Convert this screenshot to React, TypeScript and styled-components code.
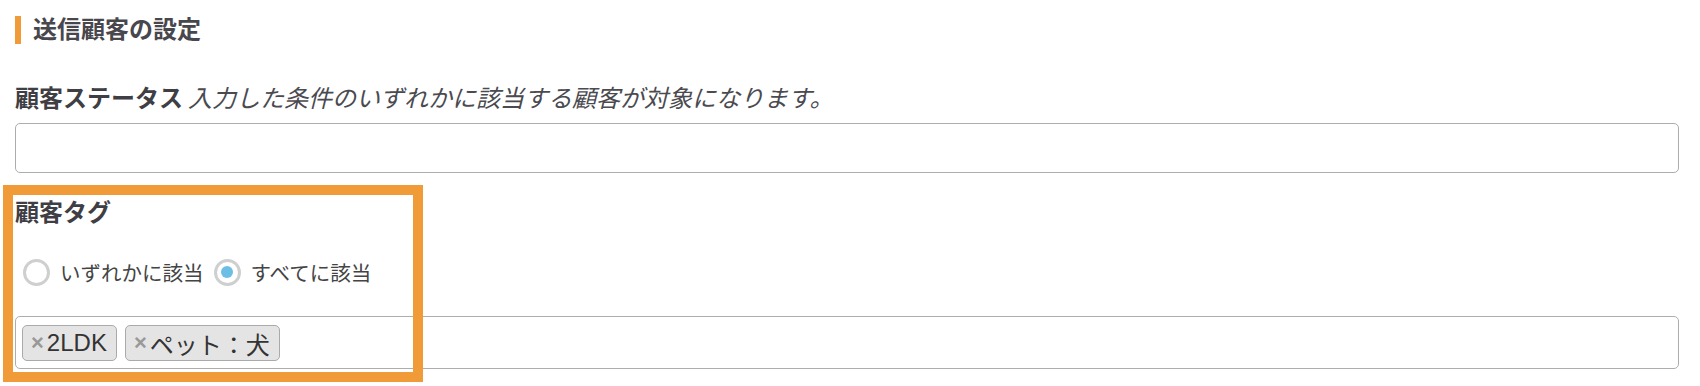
import React, { useState } from 'react';
import styled, { createGlobalStyle } from 'styled-components';

const GlobalStyle = createGlobalStyle`
  html, body {
    margin: 0;
    padding: 0;
    background: #fff;
  }
  body {
    font-family: "Liberation Sans", "Noto Sans CJK JP", sans-serif;
    color: #444;
  }
`;

const ORANGE = '#f09a38';

const Page = styled.div`
  width: 1700px;
  height: 386px;
  box-sizing: border-box;
  padding: 16px 21px 0 15px;
  overflow: hidden;
`;

const SectionTitle = styled.h2`
  margin: 0;
  border-left: 6px solid ${ORANGE};
  padding-left: 12px;
  height: 28px;
  line-height: 28px;
  font-size: 24px;
  font-weight: bold;
  color: #48474d;
`;

const Field = styled.div<{ $gap: number }>`
  margin-top: ${p => p.$gap}px;
  position: relative;
`;

const Label = styled.div`
  line-height: 30px;
  height: 30px;
  font-size: 24px;
  font-weight: bold;
  color: #3f3e45;
  white-space: nowrap;
`;

const Hint = styled.span`
  font-weight: normal;
  font-style: italic;
  font-size: 24px;
  margin-left: 5px;
  color: #4a4a50;
`;

const InputBox = styled.div<{ $h: number; $top: number }>`
  box-sizing: border-box;
  height: ${p => p.$h}px;
  margin-top: ${p => p.$top}px;
  border: 1px solid #adadad;
  border-radius: 5px;
  background: #fff;
  display: flex;
  align-items: flex-start;
  gap: 8px;
  padding: 8px 6px;
`;

const RadioRow = styled.div`
  margin-top: 29px;
  height: 30px;
  display: flex;
  align-items: center;
  padding-left: 8px;
`;

const RadioLabel = styled.label`
  display: flex;
  align-items: center;
  gap: 10px;
  margin-right: 10px;
  font-size: 20.5px;
  color: #444;
  cursor: pointer;
`;

const RadioCircle = styled.span<{ $checked: boolean }>`
  box-sizing: border-box;
  width: 27px;
  height: 27px;
  border-radius: 50%;
  border: 3px solid #cfcfcf;
  background: #fff;
  display: flex;
  align-items: center;
  justify-content: center;
  &::after {
    content: '';
    width: 12px;
    height: 12px;
    border-radius: 50%;
    background: ${p => (p.$checked ? '#6cbee6' : 'transparent')};
  }
`;

const Tag = styled.span`
  box-sizing: border-box;
  height: 36px;
  display: inline-flex;
  align-items: center;
  padding: 0 9px 0 8px;
  background: #e4e4e4;
  border: 1px solid #aaa;
  border-radius: 5px;
  font-size: 24px;
  color: #333;
`;

const TagRemove = styled.span`
  color: #999;
  font-weight: bold;
  font-size: 22px;
  margin-right: 3px;
  line-height: 1;
`;

const Highlight = styled.div`
  position: absolute;
  left: -12px;
  top: -13px;
  width: 420px;
  height: 197px;
  box-sizing: border-box;
  border: 10px solid ${ORANGE};
  pointer-events: none;
`;

const tags = ['2LDK', 'ペット：犬'];

export default function App() {
  const [mode, setMode] = useState<'any' | 'all'>('all');
  return (
    <>
      <GlobalStyle />
      <Page>
        <SectionTitle>送信顧客の設定</SectionTitle>
        <Field $gap={40}>
          <Label>
            顧客ステータス<Hint>入力した条件のいずれかに該当する顧客が対象になります。</Hint>
          </Label>
          <InputBox $h={50} $top={9} />
        </Field>
        <Field $gap={25}>
          <Label>顧客タグ</Label>
          <RadioRow>
            <RadioLabel onClick={() => setMode('any')}>
              <RadioCircle $checked={mode === 'any'} />
              いずれかに該当
            </RadioLabel>
            <RadioLabel onClick={() => setMode('all')}>
              <RadioCircle $checked={mode === 'all'} />
              すべてに該当
            </RadioLabel>
          </RadioRow>
          <InputBox $h={53} $top={29}>
            {tags.map(t => (
              <Tag key={t}>
                <TagRemove>×</TagRemove>
                {t}
              </Tag>
            ))}
          </InputBox>
          <Highlight />
        </Field>
      </Page>
    </>
  );
}
